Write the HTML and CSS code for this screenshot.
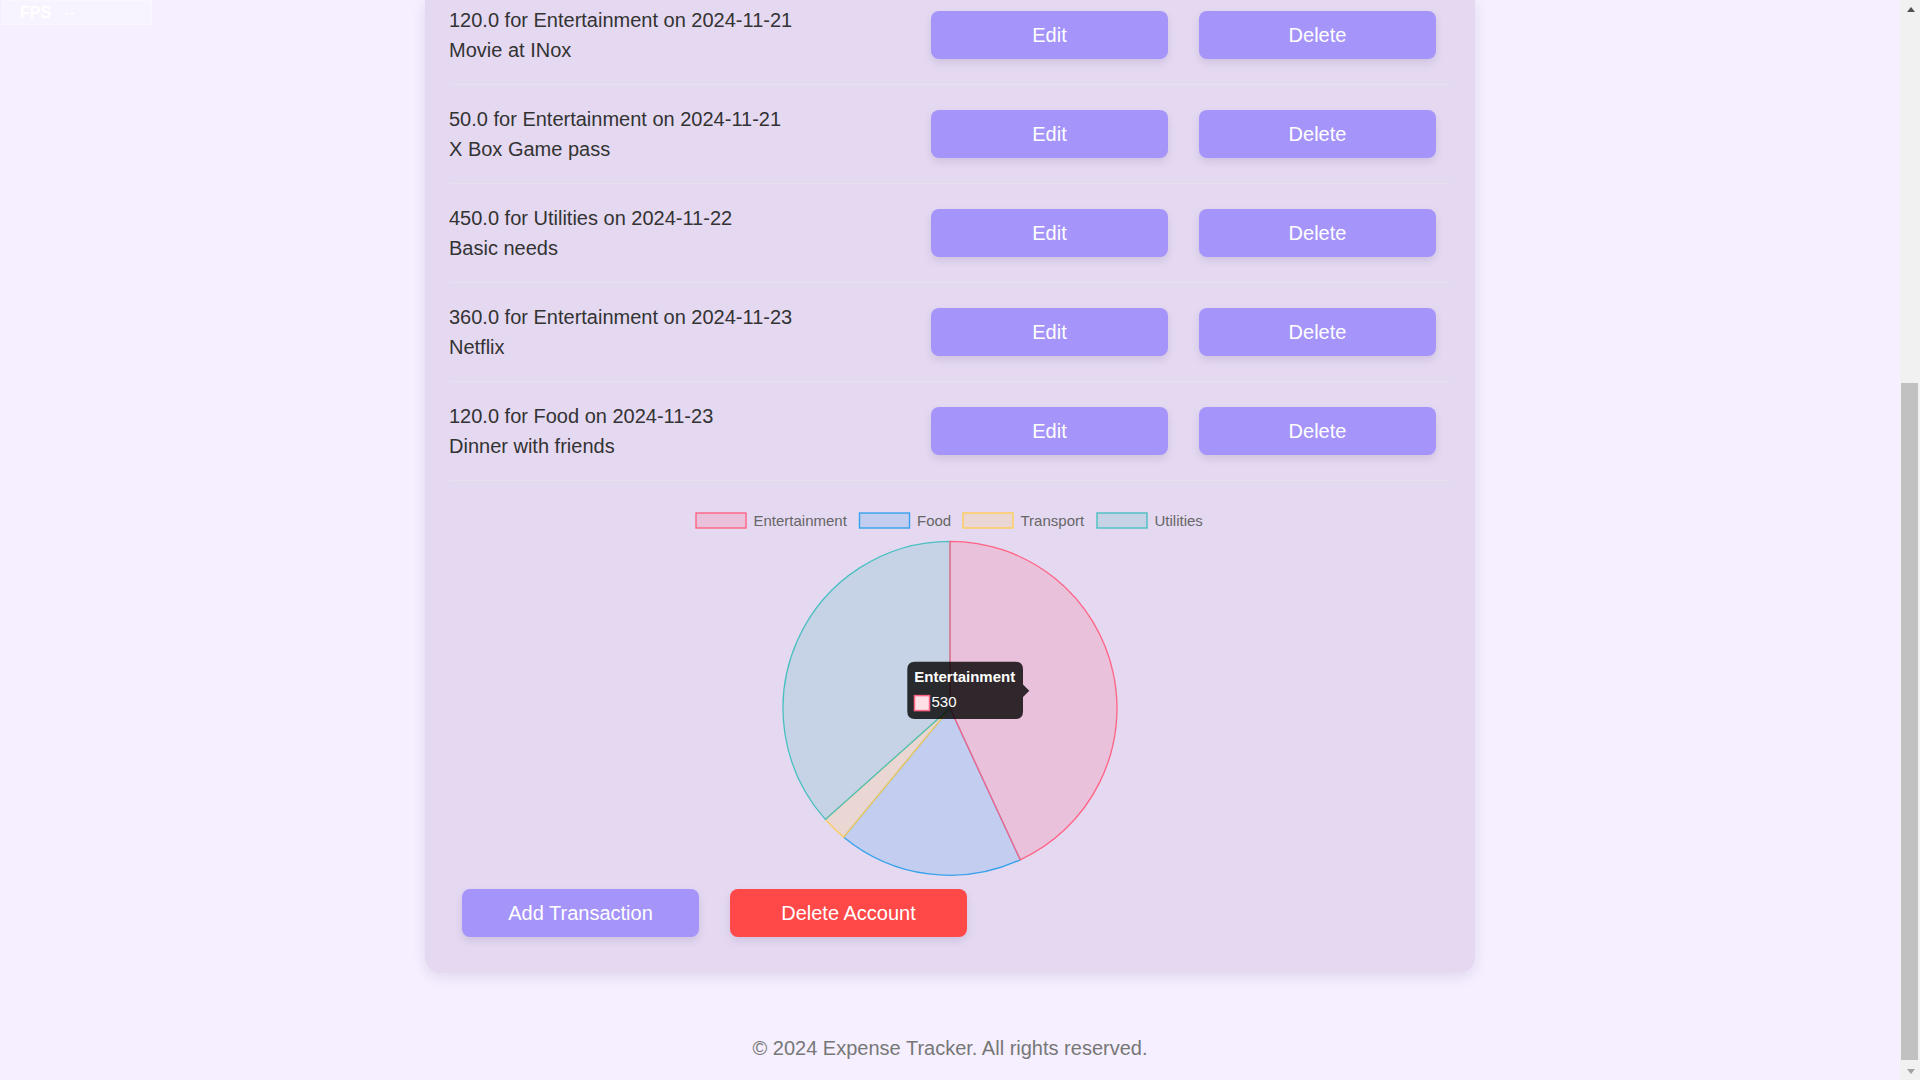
FILE: index.html
```html
<!DOCTYPE html>
<html lang="en">
<head>
<meta charset="utf-8">
<title>Expense Tracker</title>
<link rel="stylesheet" href="styles.css">
</head>
<body>
<div class="screen">
  <div class="page">
    <main class="card">
      <ul class="tx-list">
        <li class="tx tx-first">
          <div class="tx-text"><div>120.0 for Entertainment on 2024-11-21</div><div>Movie at INox</div></div>
          <div class="tx-actions"><button class="btn">Edit</button><button class="btn">Delete</button></div>
        </li>
        <li class="tx">
          <div class="tx-text"><div>50.0 for Entertainment on 2024-11-21</div><div>X Box Game pass</div></div>
          <div class="tx-actions"><button class="btn">Edit</button><button class="btn">Delete</button></div>
        </li>
        <li class="tx">
          <div class="tx-text"><div>450.0 for Utilities on 2024-11-22</div><div>Basic needs</div></div>
          <div class="tx-actions"><button class="btn">Edit</button><button class="btn">Delete</button></div>
        </li>
        <li class="tx">
          <div class="tx-text"><div>360.0 for Entertainment on 2024-11-23</div><div>Netflix</div></div>
          <div class="tx-actions"><button class="btn">Edit</button><button class="btn">Delete</button></div>
        </li>
        <li class="tx">
          <div class="tx-text"><div>120.0 for Food on 2024-11-23</div><div>Dinner with friends</div></div>
          <div class="tx-actions"><button class="btn">Edit</button><button class="btn">Delete</button></div>
        </li>
      </ul>
      <div class="chart">
        <svg class="chart-svg" width="1002" height="400" viewBox="0 0 1002 400" xmlns="http://www.w3.org/2000/svg">
          <g class="legend" font-family="'Liberation Sans', Arial, sans-serif" font-size="15" fill="#666">
            <rect x="247" y="32" width="50" height="15" fill="rgba(255,99,132,0.2)" stroke="rgb(255,99,132)" stroke-width="1.4"/>
            <text x="304.5" y="44.5">Entertainment</text>
            <rect x="410.5" y="32" width="50" height="15" fill="rgba(54,162,235,0.2)" stroke="rgb(54,162,235)" stroke-width="1.4"/>
            <text x="468" y="44.5">Food</text>
            <rect x="514" y="32" width="50" height="15" fill="rgba(255,205,86,0.2)" stroke="rgb(255,205,86)" stroke-width="1.4"/>
            <text x="571.5" y="44.5">Transport</text>
            <rect x="648" y="32" width="50" height="15" fill="rgba(75,192,192,0.2)" stroke="rgb(75,192,192)" stroke-width="1.4"/>
            <text x="705.5" y="44.5">Utilities</text>
          </g>
          <g class="pie" stroke-width="1.3" stroke-linejoin="round">
            <path d="M501,227.3 L571.26,378.8 A167,167 0 0 1 394.75,356.16 Z" fill="rgba(54,162,235,0.2)" stroke="rgb(54,162,235)"/>
            <path d="M501,227.3 L394.75,356.16 A167,167 0 0 1 376.32,338.4 Z" fill="rgba(255,205,86,0.2)" stroke="rgb(255,205,86)"/>
            <path d="M501,227.3 L376.32,338.4 A167,167 0 0 1 501,60.3 Z" fill="rgba(75,192,192,0.2)" stroke="rgb(75,192,192)"/>
            <path d="M501,227.3 L501,60.3 A167,167 0 0 1 571.26,378.8 Z" fill="rgba(255,99,132,0.2)" stroke="rgb(255,99,132)"/>
          </g>
          <g class="tooltip">
            <path d="M465.8,180.7 H566.5 Q574,180.7 574,188.2 V203.5 L580.3,209.7 L574,216 V230.5 Q574,238 566.5,238 H465.8 Q458.3,238 458.3,230.5 V188.2 Q458.3,180.7 465.8,180.7 Z" fill="rgba(0,0,0,0.8)"/>
            <text x="465.3" y="201" font-family="'Liberation Sans', Arial, sans-serif" font-size="15" font-weight="bold" fill="#fff">Entertainment</text>
            <rect x="465.5" y="214.6" width="15" height="15" fill="#ffe0e6" stroke="rgb(255,99,132)" stroke-width="1.5"/>
            <text x="482.5" y="226" font-family="'Liberation Sans', Arial, sans-serif" font-size="15" fill="#fff">530</text>
          </g>
        </svg>
      </div>
      <div class="actions">
        <button class="btn">Add Transaction</button>
        <button class="btn btn-danger">Delete Account</button>
      </div>
    </main>
    <footer class="footer">© 2024 Expense Tracker. All rights reserved.</footer>
  </div>
  <div class="scrollbar">
    <div class="sb-arrow"><span class="tri-up"></span></div>
    <div class="sb-track">
      <div class="sb-space"></div>
      <div class="sb-thumb"></div>
    </div>
    <div class="sb-arrow"><span class="tri-down"></span></div>
  </div>
</div>
<div class="fps"><b>FPS</b><span>--</span></div>
</body>
</html>
```

FILE: styles.css
```css
* { box-sizing: border-box; }

html, body {
  margin: 0;
  padding: 0;
  height: 100%;
  overflow: hidden;
}

body {
  background: #F5EFFF;
  font-family: "Liberation Sans", Arial, sans-serif;
  color: #333;
}

.screen {
  display: flex;
  height: 1080px;
  width: 1920px;
}

.page {
  flex: 1;
  display: flex;
  flex-direction: column;
  align-items: center;
  overflow: hidden;
}

.card {
  width: 1050px;
  background: #E5D9F2;
  border-radius: 0 0 16px 16px;
  padding: 0 24px 36px;
  box-shadow: 0 4px 14px rgba(60, 30, 100, 0.10);
}

.tx-list {
  list-style: none;
  margin: 0;
  padding: 0;
}

.tx {
  display: flex;
  justify-content: space-between;
  align-items: center;
  padding: 19px 0;
  border-bottom: 1px solid #e7e0ef;
}

.tx-first {
  padding-top: 5px;
}

.tx-text {
  font-size: 20px;
  line-height: 30px;
  color: #333;
}

.tx-actions {
  display: flex;
}

.btn {
  width: 237px;
  height: 48px;
  margin: 0 15px;
  border: none;
  border-radius: 8px;
  background: #A594F9;
  color: #fff;
  font-family: "Liberation Sans", Arial, sans-serif;
  font-size: 20px;
  box-shadow: 0 4px 8px rgba(60, 30, 100, 0.12);
  cursor: pointer;
}

.tx-actions .btn:last-child {
  margin-left: 16px;
}

.btn-danger {
  background: #FF4848;
}

.chart {
  display: flex;
}

.chart-svg {
  display: block;
}

.actions {
  display: flex;
  margin-top: 8px;
}

.actions .btn:first-child {
  margin-left: 13px;
  margin-right: 16px;
}

.footer {
  margin-top: 64px;
  font-size: 20px;
  line-height: 23px;
  color: #777;
  text-align: center;
}

.scrollbar {
  width: 20px;
  height: 1080px;
  background: #f1f1f1;
  display: flex;
  flex-direction: column;
}

.sb-arrow {
  height: 20px;
  display: flex;
  justify-content: center;
  align-items: center;
}

.tri-up {
  width: 0;
  height: 0;
  border-left: 4.5px solid transparent;
  border-right: 4.5px solid transparent;
  border-bottom: 5px solid #505050;
  margin-top: -2px;
  margin-left: 1px;
}

.tri-down {
  width: 0;
  height: 0;
  border-left: 4.5px solid transparent;
  border-right: 4.5px solid transparent;
  border-top: 5px solid #a3a3a3;
  margin-top: 2px;
  margin-left: 1px;
}

.sb-track {
  flex: 1;
  display: flex;
  flex-direction: column;
}

.sb-space {
  height: 363px;
}

.sb-thumb {
  flex: 1;
  margin: 0 2px 0 1px;
  background: #c1c1c1;
}

.fps {
  position: fixed;
  top: 0;
  left: 2px;
  width: 150px;
  height: 25px;
  display: flex;
  align-items: center;
  gap: 13px;
  padding-left: 17px;
  background: rgba(255, 255, 255, 0.3);
  border: 1px solid rgba(255, 255, 255, 0.35);
  color: #fff;
  font-family: "Liberation Sans", Arial, sans-serif;
  font-size: 16px;
}

.fps b {
  font-weight: bold;
}
```
